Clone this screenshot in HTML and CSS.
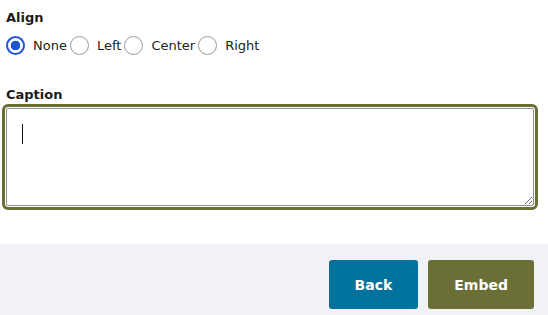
FILE: index.html
```html
<!DOCTYPE html>
<html lang="en">
<head>
<meta charset="utf-8">
<title>Embed</title>
<link rel="stylesheet" href="styles.css">
</head>
<body>
<div class="page">
  <div class="content">
    <div class="field-title">Align</div>
    <div class="radio-row">
      <label class="radio-item"><input type="radio" name="align" class="radio" checked><span>None</span></label>
      <label class="radio-item"><input type="radio" name="align" class="radio"><span>Left</span></label>
      <label class="radio-item"><input type="radio" name="align" class="radio"><span>Center</span></label>
      <label class="radio-item"><input type="radio" name="align" class="radio"><span>Right</span></label>
    </div>
    <label class="field-title caption-title" for="caption">Caption</label>
    <div class="caption-wrap">
      <textarea id="caption" class="caption" autofocus></textarea>
      <span class="caret"></span>
    </div>
  </div>
  <div class="footer">
    <button class="btn btn-back" type="button">Back</button>
    <button class="btn btn-embed" type="button">Embed</button>
  </div>
</div>
</body>
</html>
```
FILE: styles.css
```css
html, body {
  margin: 0;
  padding: 0;
  background: #ffffff;
}
body {
  font-family: "DejaVu Sans", Verdana, sans-serif;
  color: #222222;
  width: 548px;
  height: 315px;
  overflow: hidden;
}
.page {
  display: flex;
  flex-direction: column;
  height: 315px;
}
.content {
  padding: 10px 14px 0 6px;
  display: flex;
  flex-direction: column;
}
.field-title {
  display: block;
  font-weight: bold;
  font-size: 13px;
  line-height: 16px;
  color: #1c1c1c;
}
.radio-row {
  display: flex;
  align-items: center;
  margin-top: 10px;
  height: 19px;
}
.radio-item {
  display: flex;
  align-items: center;
  font-size: 13px;
  line-height: 16px;
  margin-right: 3px;
  color: #222222;
}
.radio {
  -webkit-appearance: none;
  appearance: none;
  width: 19px;
  height: 19px;
  margin: 0 8px 0 0;
  border: 1.5px solid #9a9a9a;
  border-radius: 50%;
  background: #ffffff;
  box-sizing: border-box;
}
.radio:checked {
  border: 2.5px solid #1f55d3;
  background: radial-gradient(circle, #1f55d3 0 4.5px, #ffffff 5.1px);
}
.radio:focus {
  outline: none;
}
.caption-title {
  margin-top: 32px;
}
.caption-wrap {
  position: relative;
  margin-top: 5px;
  width: 528px;
  height: 98px;
}
.caption {
  display: block;
  width: 528px;
  height: 98px;
  box-sizing: border-box;
  border: 1px solid #8f8f96;
  border-radius: 2px;
  outline: 3px solid #6b6e35;
  outline-offset: 1px;
  padding: 12px 15px;
  font-family: "DejaVu Sans", Verdana, sans-serif;
  font-size: 16px;
  line-height: 22px;
  color: #111111;
  caret-color: transparent;
  resize: both;
}
.caption:focus {
  outline: 3px solid #6b6e35;
  outline-offset: 1px;
}
.caret {
  position: absolute;
  left: 16px;
  top: 16px;
  width: 1px;
  height: 20px;
  background: #111111;
  pointer-events: none;
}
.footer {
  margin-top: 38px;
  flex: 1;
  background: #f1f2f7;
  display: flex;
  justify-content: flex-end;
  align-items: flex-start;
  gap: 10px;
  padding: 16px 14px 0 0;
}
.btn {
  height: 49px;
  border: none;
  border-radius: 3px;
  padding: 0 26px;
  font-family: "DejaVu Sans", Verdana, sans-serif;
  font-weight: bold;
  font-size: 14px;
  color: #ffffff;
  cursor: pointer;
}
.btn-back {
  background: #00739d;
}
.btn-embed {
  background: #6b6e35;
}
```
